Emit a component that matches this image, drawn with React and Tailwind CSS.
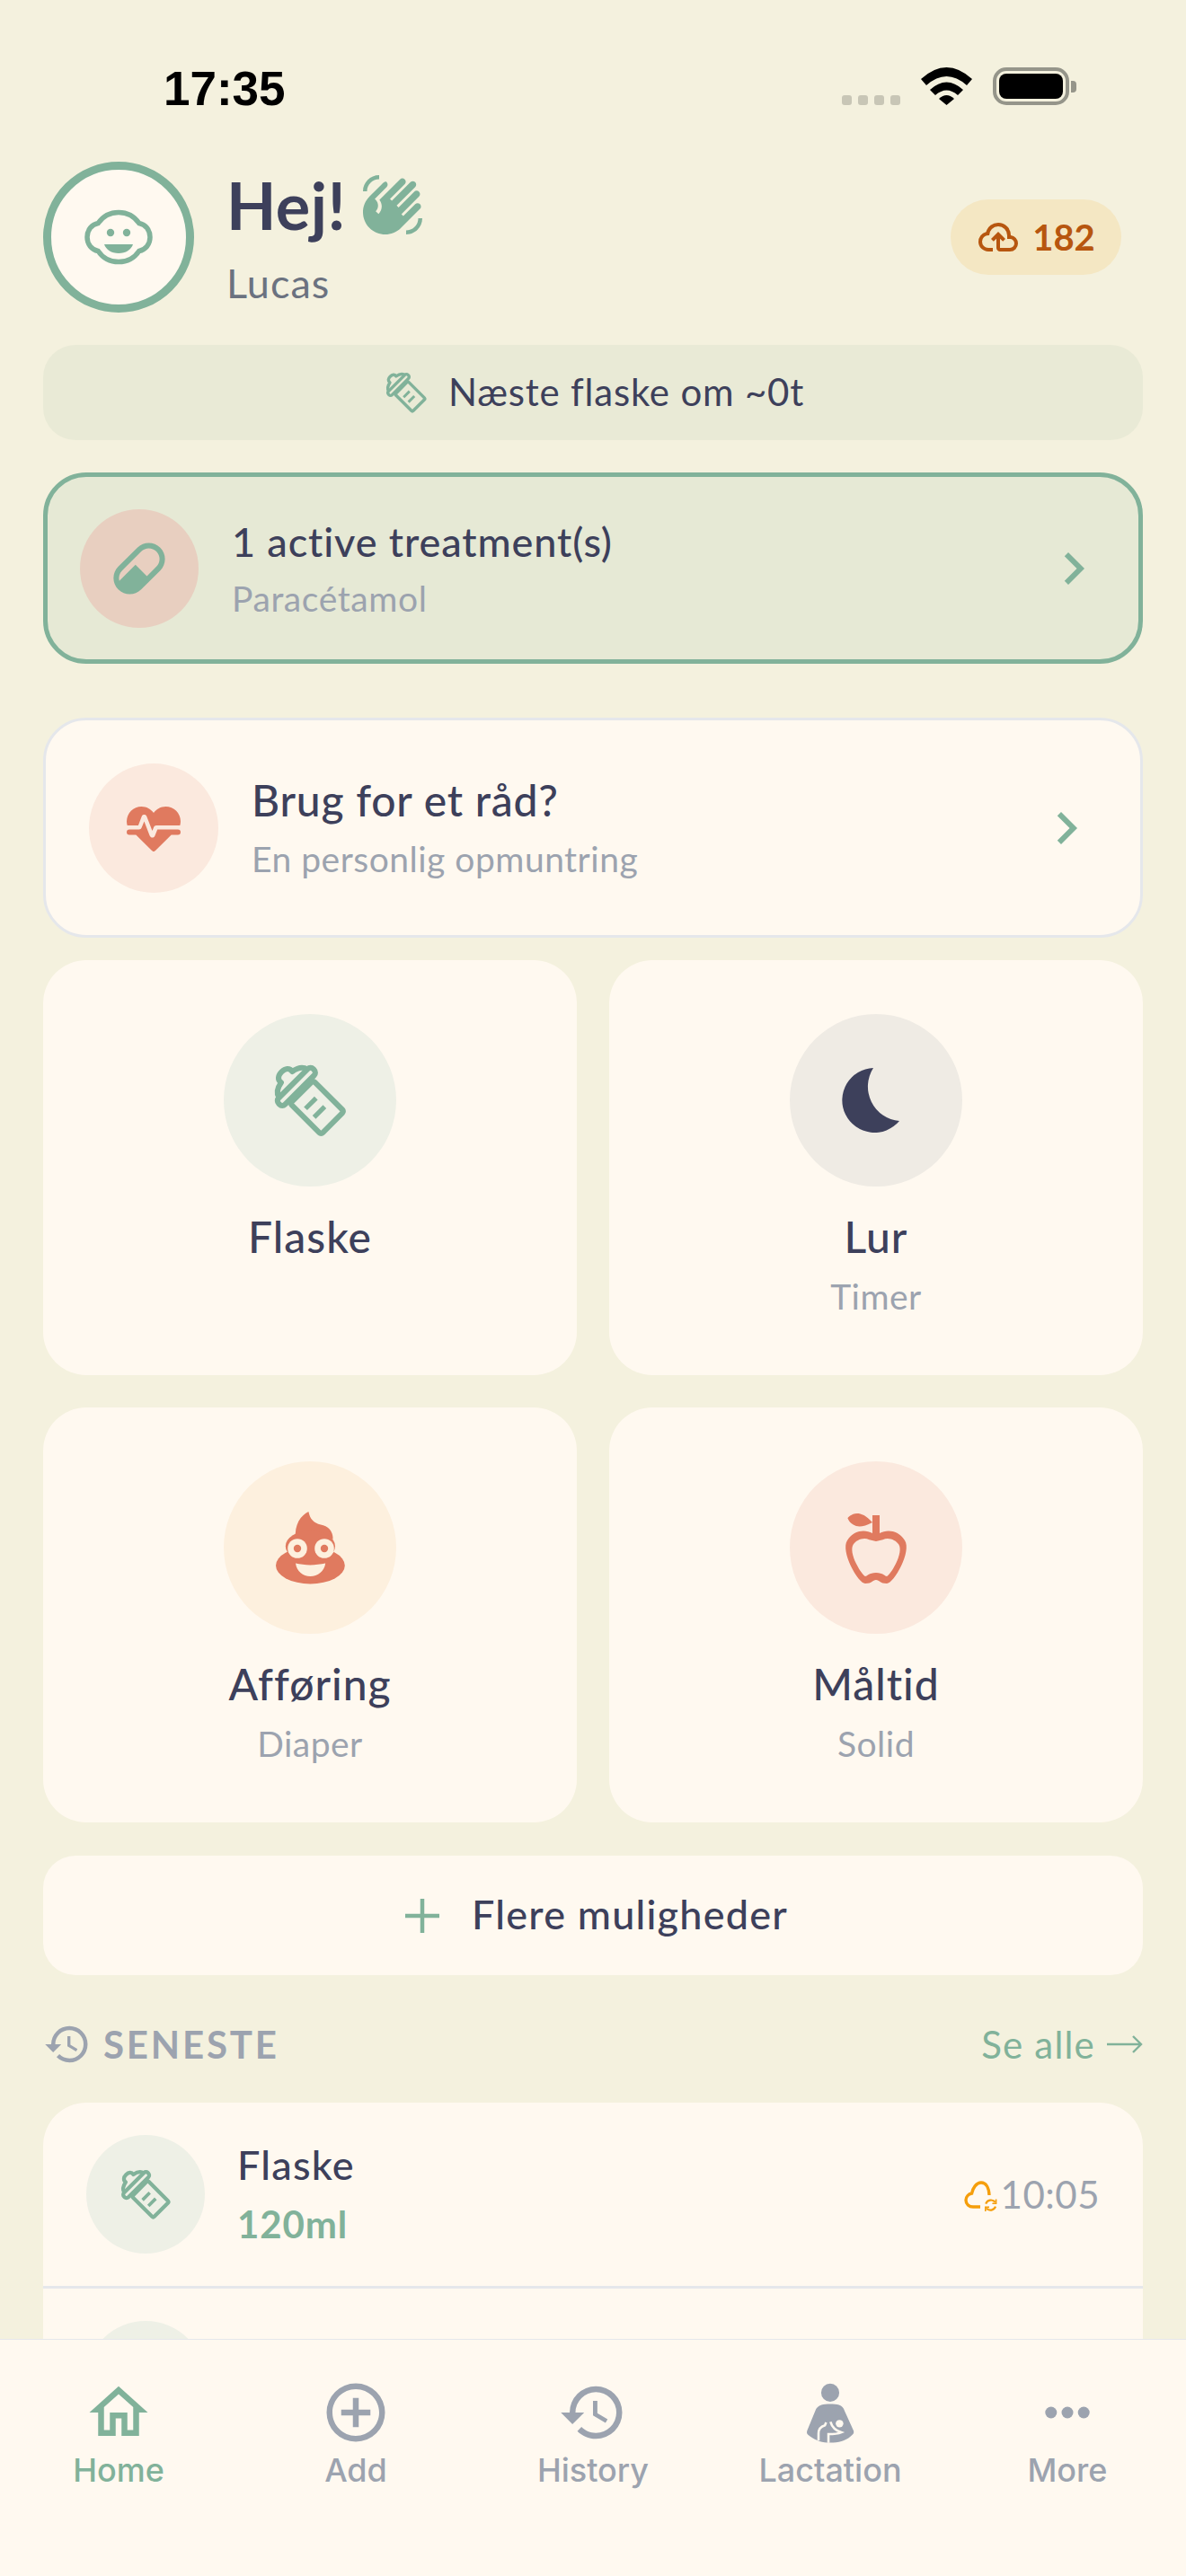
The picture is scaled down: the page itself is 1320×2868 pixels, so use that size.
import React from 'react';

const FONT = "font-['Lato','Noto_Sans',sans-serif]";

// icon paths, 24 unit grid
const PILL = 'M4.22,11.29L11.29,4.22C13.64,1.88 17.43,1.88 19.78,4.22C22.12,6.56 22.12,10.36 19.78,12.71L12.71,19.78C10.36,22.12 6.56,22.12 4.22,19.78C1.88,17.43 1.88,13.64 4.22,11.29M5.64,12.71C4.59,13.75 4.24,15.24 4.6,16.57L10.59,10.59L14.83,14.83L18.36,11.29C19.93,9.73 19.93,7.2 18.36,5.64C16.8,4.07 14.27,4.07 12.71,5.64L5.64,12.71Z';
const HEART = 'M7.5,4A5.5,5.5 0 0,0 2,9.5C2,10 2.09,10.5 2.22,11H6.3L7.57,7.63C7.87,6.83 9.05,6.75 9.43,7.63L11.5,13L12.09,11.58C12.22,11.25 12.57,11 13,11H21.78C21.91,10.5 22,10 22,9.5A5.5,5.5 0 0,0 16.5,4C14.64,4 13,4.93 12,6.34C11,4.93 9.36,4 7.5,4M3,12.5A1,1 0 0,0 2,13.5A1,1 0 0,0 3,14.5H5.44L11,20C12,20.9 12,20.9 13,20L18.56,14.5H21A1,1 0 0,0 22,13.5A1,1 0 0,0 21,12.5H13.4L12.47,14.8C12.07,15.81 10.92,15.67 10.55,14.83L8.5,9.5L7.54,11.83C7.39,12.21 7.05,12.5 6.6,12.5H3Z';
const CHEVRON = 'M8.59,16.58L13.17,12L8.59,7.41L10,6L16,12L10,18L8.59,16.58Z';
const CLOUD_UP = 'M6.5 20Q4.22 20 2.61 18.43 1 16.85 1 14.58 1 12.63 2.17 11.1 3.35 9.57 5.25 9.15 5.88 6.85 7.75 5.43 9.63 4 12 4 14.93 4 16.96 6.04 19 8.07 19 11 20.73 11.2 21.86 12.5 23 13.78 23 15.5 23 17.38 21.69 18.69 20.38 20 18.5 20H13Q12.18 20 11.59 19.41 11 18.83 11 18V12.85L9.4 14.4L8 13L12 9L16 13L14.6 14.4L13 12.85V18H18.5Q19.55 18 20.27 17.27 21 16.55 21 15.5 21 14.45 20.27 13.73 19.55 13 18.5 13H17V11Q17 8.93 15.54 7.46 14.08 6 12 6 9.93 6 8.46 7.46 7 8.93 7 11H6.5Q5.05 11 4.03 12.03 3 13.05 3 14.5 3 15.95 4.03 17 5.05 18 6.5 18H9V20Z';
const WAVE = 'M23 17C23 20.31 20.31 23 17 23V21.5C19.5 21.5 21.5 19.5 21.5 17H23M1 7C1 3.69 3.69 1 7 1V2.5C4.5 2.5 2.5 4.5 2.5 7H1M8.03 4.32L3.41 8.92C.19 12.14 .19 17.37 3.41 20.59S11.86 23.81 15.08 20.59L22.15 13.5C22.64 13.03 22.64 12.24 22.15 11.75C21.66 11.26 20.87 11.26 20.38 11.75L15.96 16.17L15.25 15.46L21.79 8.92C22.28 8.43 22.28 7.64 21.79 7.15S20.5 6.66 20 7.15L14.19 13L13.5 12.27L20.37 5.38C20.86 4.89 20.86 4.1 20.37 3.61S19.09 3.12 18.6 3.61L11.71 10.5L11 9.8L16.5 4.32C17 3.83 17 3.04 16.5 2.55S15.22 2.06 14.73 2.55L7.11 10.17C8.33 11.74 8.22 14 6.78 15.45L5.72 14.39C6.89 13.22 6.89 11.32 5.72 10.15L5.37 9.8L9.78 5.39C10.27 4.9 10.27 4.11 9.78 3.62S8.5 3.83 8.03 4.32Z';
const APPLE = 'M20,10C22,13 17,22 15,22C13,22 13,21 12,21C11,21 11,22 9,22C7,22 2,13 4,10C6,7 9,7 11,8V5C5.38,8.07 4.11,3.78 4.11,3.78C4.11,3.78 6.77,0.19 11,5V3H13V8C15,7 18,7 20,10M18.32,11.11C17.5,9.87 15.5,9 13.89,9.79L12,10.24L10.11,9.79C8.5,9 6.5,9.87 5.68,11.11C5,12.14 5.37,14.22 6.5,16.5C7.5,18.5 8.5,19.7 9,20C9.5,20 10,19 12,19C14,19 14.5,20 15,20C15.5,19.7 16.5,18.5 17.5,16.5C18.63,14.22 19,12.14 18.32,11.11Z';
const HOME = 'M12 5.69L17 10.19V18H15V12H9V18H7V10.19L12 5.69M12 3L2 12H5V20H11V14H13V20H19V12H22L12 3Z';
const ADD = 'M12,20C7.59,20 4,16.41 4,12C4,7.59 7.59,4 12,4C16.41,4 20,7.59 20,12C20,16.41 16.41,20 12,20M12,2A10,10 0 0,0 2,12A10,10 0 0,0 12,22A10,10 0 0,0 22,12A10,10 0 0,0 12,2M13,7H11V11H7V13H11V17H13V13H17V11H13V7Z';
const HISTORY = 'M13.5,8H12V13L16.28,15.54L17,14.33L13.5,12.25V8M13,3A9,9 0 0,0 4,12H1L4.96,16.03L9,12H6A7,7 0 0,1 13,5A7,7 0 0,1 20,12A7,7 0 0,1 13,19C11.07,19 9.32,18.21 8.06,16.94L6.64,18.36C8.27,20 10.5,21 13,21A9,9 0 0,0 22,12A9,9 0 0,0 13,3';

function Mdi({ d, size, className = '' }) {
  return (
    <svg viewBox="0 0 24 24" width={size} height={size} className={`shrink-0 fill-current ${className}`}>
      <path d={d} fillRule="evenodd" />
    </svg>
  );
}

function Bottle({ size }) {
  return (
    <svg viewBox="1 1 22 22" width={size} height={size} fill="none" stroke="#81B29A" strokeWidth="1.4" strokeLinejoin="round" className="shrink-0">
      <g transform="rotate(-45 12 12)">
        <rect x="7.85" y="9" width="8.3" height="11.15" rx="0.6" />
        <rect x="5.75" y="5.95" width="12.5" height="2.3" rx="1" />
        <path d="M6.9 5.9C7.2 4.6 8.3 3.9 10 3.6C9.8 2.4 10.7 1.75 12 1.75C13.3 1.75 14.2 2.4 14 3.6C15.7 3.9 16.8 4.6 17.1 5.9" />
        <path d="M9.7 12.7H13.5M9.7 15.8H13.5" strokeWidth="1.2" />
      </g>
    </svg>
  );
}

function BabyFace() {
  return (
    <svg viewBox="0 0 84 84" width="84" height="84" fill="none" className="shrink-0">
      <path d="M19.2 26.5A27.5 27.5 0 0 1 64.8 26.5C72 28 77 34 77 42C77 50 72 56 64.8 57.5A27.5 27.5 0 0 1 19.2 57.5C12 56 7 50 7 42C7 34 12 28 19.2 26.5Z" stroke="#81B29A" strokeWidth="5.5" />
      <circle cx="33" cy="37" r="4.2" fill="#81B29A" />
      <circle cx="51" cy="37" r="4.2" fill="#81B29A" />
      <path d="M26 50H58C56 56 50 60 42 60C34 60 28 56 26 50Z" fill="#81B29A" />
    </svg>
  );
}

function Moon() {
  return (
    <svg viewBox="0 0 24 24" width="96" height="96" className="shrink-0">
      <path d="M11.25 3A9 9 0 1 0 18.5 17.75A9.6 9.6 0 0 1 11.25 3Z" fill="#3D405B" />
    </svg>
  );
}

function Poop() {
  return (
    <svg viewBox="0 0 24 24" width="96" height="96" className="shrink-0">
      <g fill="#E07A5F">
        <path d="M11.6 2C12 4 13 5.2 15 5.6C17 6 18.4 7.2 18.4 9.6L8 9.6C7.6 5.5 9.5 3 11.6 2Z" />
        <ellipse cx="12.1" cy="11.6" rx="6.9" ry="4.3" />
        <ellipse cx="12.1" cy="17" rx="9.6" ry="5.1" />
      </g>
      <circle cx="8.5" cy="12.25" r="2.7" fill="#FDF0DE" />
      <circle cx="16" cy="12.25" r="2.7" fill="#FDF0DE" />
      <circle cx="8.5" cy="12.25" r="1.05" fill="#E07A5F" />
      <circle cx="16" cy="12.25" r="1.05" fill="#E07A5F" />
      <path d="M8 16.4C10.5 17 13.6 17 16.3 16.4C16 18.6 14.2 20 12.1 20C10 20 8.3 18.6 8 16.4Z" fill="#FDF0DE" />
    </svg>
  );
}

function CloudSync() {
  return (
    <svg viewBox="0 0 42 42" width="42" height="42" fill="none" className="shrink-0">
      <path d="M19 35H11C6.5 35 3 31.8 3 27.6C3 23.6 6 20.7 9.6 20C10.6 14.3 14.6 8 20 8C25.4 8 28.6 13.6 29 22" stroke="#F59E0B" strokeWidth="3.4" />
      <path d="M25.2 31.6A6 6 0 0 1 35.6 29.8M36 34.6A6 6 0 0 1 25.8 36.6" stroke="#F59E0B" strokeWidth="2.2" />
      <path d="M36.6 26.6V31.2H32.4M24.8 40V35.4H29" stroke="#F59E0B" strokeWidth="1.6" />
    </svg>
  );
}

function Nurse() {
  return (
    <svg viewBox="0 0 24 24" width="78" height="78" className="shrink-0">
      <circle cx="12" cy="5.2" r="3.1" fill="#9CA3AF" />
      <path d="M9 9.4C10.5 9 13.5 9 15 9.4C16 9.7 16.6 10.4 16.9 11.4L20 18.2C20.2 18.8 20 19.3 19.5 19.7C18 21.2 15.8 22.3 13 22.3H11C8.6 22.3 6 21 4.5 19.7C4 19.3 3.9 18.8 4.1 18.2L6.9 11.4C7.2 10.4 8 9.7 9 9.4Z" fill="#9CA3AF" />
      <circle cx="15.2" cy="15.8" r="1.3" fill="#FFF9F0" />
      <path d="M12.1 15.2C12.6 17 13.6 18.1 15.8 18.8C14.6 19.3 13 19.4 11.4 19.4V22.4M10.6 15.4L10.2 16.4C8.8 16.8 8 17.6 8 19.2V21.6" fill="none" stroke="#FFF9F0" strokeWidth="0.8" />
    </svg>
  );
}

function Dots() {
  return (
    <svg viewBox="0 0 24 24" width="78" height="78" className="shrink-0 fill-[#9CA3AF]">
      <circle cx="6.4" cy="12" r="2" />
      <circle cx="12" cy="12" r="2" />
      <circle cx="17.6" cy="12" r="2" />
    </svg>
  );
}

function Arrow() {
  return (
    <svg viewBox="0 0 40 24" width="40" height="24" fill="none" stroke="#81B29A" strokeWidth="2.4" className="shrink-0">
      <path d="M0 12H38M29 3L38 12L29 21" />
    </svg>
  );
}

function StatusBar() {
  return (
    <div className="flex h-[180px] justify-between pl-[182px] pr-[122px] pt-[72px]">
      <span className="font-['Liberation_Sans',sans-serif] text-[53px] font-bold leading-[54px] text-black">17:35</span>
      <div className="flex items-start pt-[3px]">
        <div className="mt-[31px] flex gap-[7px]">
          {[0, 1, 2, 3].map((i) => (
            <span key={i} className="h-[11px] w-[11px] rounded-[3px] bg-[#C8C6B6]" />
          ))}
        </div>
        <svg viewBox="0 0 57 42" width="57" height="42" className="ml-[23px] shrink-0">
          <path d="M0 13Q28.5 -13 57 13L51 20Q28.5 0 6 20Z" fill="#000" />
          <path d="M10 25Q28.5 8 47 25L41 31Q28.5 20 16 31Z" fill="#000" />
          <path d="M20 35Q28.5 27 37 35L28.5 42Z" fill="#000" />
        </svg>
        <div className="ml-[23px] flex items-center">
          <div className="h-[42px] w-[85px] rounded-[15px] border-[4px] border-[#95958A] p-[3px]">
            <div className="h-full rounded-[8px] bg-black" />
          </div>
          <div className="ml-[2px] h-[13px] w-[6px] rounded-r-[4px] bg-[#95958A]" />
        </div>
      </div>
    </div>
  );
}

function Header() {
  return (
    <div className="flex items-center justify-between pl-[48px] pr-[72px]">
      <div className="flex items-center">
        <div className="flex h-[168px] w-[168px] items-center justify-center rounded-full border-[9px] border-[#81B29A] bg-[#FFF9F0]">
          <BabyFace />
        </div>
        <div className="ml-[36px]">
          <div className="flex items-center">
            <span className="text-[72px] font-bold leading-[84px] tracking-[0.5px] text-[#3D405B]">Hej!</span>
            <span className="ml-[16px] text-[#81B29A]"><Mdi d={WAVE} size={72} /></span>
          </div>
          <div className="mt-[18px] text-[45px] leading-[54px] tracking-[1px] text-[#6B7280]">Lucas</div>
        </div>
      </div>
      <div className="flex h-[84px] w-[190px] items-center justify-center gap-[14px] rounded-full bg-[#F4E7C3] text-[#B7560F]">
        <Mdi d={CLOUD_UP} size={48} />
        <span className="text-[40px] font-bold leading-none">182</span>
      </div>
    </div>
  );
}

function ActionCard({ icon, bg, title, sub }) {
  return (
    <div className="flex h-[462px] flex-col items-center rounded-[48px] bg-[#FFF9F0] pt-[60px]">
      <div className={`flex h-[192px] w-[192px] items-center justify-center rounded-full ${bg}`}>{icon}</div>
      <div className="mt-[23px] text-[48px] font-medium leading-[66px] tracking-[1px] text-[#3D405B]">{title}</div>
      {sub && <div className="mt-[6px] text-[39px] leading-[54px] tracking-[0.5px] text-[#9CA3AF]">{sub}</div>}
    </div>
  );
}

function TabItem({ icon, label, active }) {
  return (
    <div className="flex w-[264px] flex-col items-center">
      <div className={active ? 'text-[#81B29A]' : 'text-[#9CA3AF]'}>{icon}</div>
      <span className={`mt-[3px] font-['Inter',sans-serif] text-[36px] font-medium leading-[44px] ${active ? 'text-[#81B29A]' : 'text-[#9CA3AF]'}`}>{label}</span>
    </div>
  );
}

export default function App() {
  return (
    <div className={`relative h-[2868px] w-[1320px] overflow-hidden bg-[#F4F1DE] ${FONT}`}>
      <StatusBar />
      <Header />

      <div className="px-[48px]">
        {/* next bottle */}
        <div className="mt-[36px] flex h-[106px] items-center justify-center gap-[20px] rounded-[36px] bg-[#E9EAD6]">
          <Bottle size={54} />
          <span className="pb-[2px] text-[42px] leading-none tracking-[0.8px] text-[#3D405B]">Næste flaske om ~0t</span>
        </div>

        {/* treatment */}
        <div className="mt-[36px] flex h-[213px] items-center rounded-[48px] border-[5px] border-[#81B29A] bg-[#E6E9D5] pl-[36px] pr-[36px]">
          <div className="flex h-[132px] w-[132px] shrink-0 items-center justify-center rounded-full bg-[#E8CFC0] text-[#81B29A]">
            <Mdi d={PILL} size={72} />
          </div>
          <div className="ml-[37px] flex-1">
            <div className="text-[45px] font-medium leading-[60px] tracking-[0.9px] text-[#3D405B]">1 active treatment(s)</div>
            <div className="mt-[6px] text-[39px] leading-[54px] tracking-[0.6px] text-[#9CA3AF]">Paracétamol</div>
          </div>
          <Mdi d={CHEVRON} size={72} className="text-[#81B29A]" />
        </div>

        {/* advice */}
        <div className="mt-[60px] flex h-[245px] items-center rounded-[48px] border-[3px] border-[#E5E7EB] bg-[#FFF9F0] pl-[48px] pr-[46px]">
          <div className="flex h-[144px] w-[144px] shrink-0 items-center justify-center rounded-full bg-[#FBE9DE] text-[#E07A5F]">
            <Mdi d={HEART} size={72} />
          </div>
          <div className="ml-[37px] flex-1 pb-[3px]">
            <div className="text-[48px] font-medium leading-[66px] tracking-[0.8px] text-[#3D405B]">Brug for et råd?</div>
            <div className="mt-[5px] text-[39px] leading-[54px] tracking-[0.5px] text-[#9CA3AF]">En personlig opmuntring</div>
          </div>
          <Mdi d={CHEVRON} size={72} className="text-[#81B29A]" />
        </div>

        {/* quick actions */}
        <div className="mt-[25px] grid grid-cols-2 gap-x-[36px] gap-y-[36px]">
          <ActionCard icon={<Bottle size={96} />} bg="bg-[#EEF0E6]" title="Flaske" />
          <ActionCard icon={<Moon />} bg="bg-[#EFEBE4]" title="Lur" sub="Timer" />
          <ActionCard icon={<Poop />} bg="bg-[#FDF0DE]" title="Afføring" sub="Diaper" />
          <ActionCard icon={<Mdi d={APPLE} size={96} className="text-[#E07A5F]" />} bg="bg-[#FBE9DE]" title="Måltid" sub="Solid" />
        </div>

        {/* more */}
        <div className="mt-[37px] flex h-[133px] items-center justify-center gap-[36px] rounded-[36px] bg-[#FFF9F0] pl-[8px]">
          <svg viewBox="0 0 38 38" width="38" height="38" stroke="#81B29A" strokeWidth="4.5" className="shrink-0">
            <path d="M19 0V38M0 19H38" />
          </svg>
          <span className="pb-[2px] text-[45px] font-medium leading-none tracking-[1.2px] text-[#3D405B]">Flere muligheder</span>
        </div>

        {/* recent header */}
        <div className="mt-[50px] flex h-[54px] items-center justify-between">
          <div className="flex items-center">
            <Mdi d={HISTORY} size={54} className="text-[#9CA3AF]" />
            <span className="ml-[13px] text-[42px] font-bold leading-none tracking-[2.8px] text-[#9CA3AF]">SENESTE</span>
          </div>
          <div className="flex items-center gap-[13px]">
            <span className="text-[42px] leading-none tracking-[1.2px] text-[#81B29A]">Se alle</span>
            <Arrow />
          </div>
        </div>

        {/* recent list */}
        <div className="mt-[38px] rounded-[48px] bg-[#FFF9F0]">
          <div className="flex items-center border-b-[3px] border-[#E5E7EB] px-[48px] py-[36px]">
            <div className="flex h-[132px] w-[132px] shrink-0 items-center justify-center rounded-full bg-[#EEF0E6]">
              <Bottle size={66} />
            </div>
            <div className="ml-[36px] flex-1 pb-[3px]">
              <div className="text-[45px] font-medium leading-[60px] tracking-[1.2px] text-[#3D405B]">Flaske</div>
              <div className="mt-[9px] text-[42px] font-bold leading-[54px] tracking-[0.9px] text-[#81B29A]">120ml</div>
            </div>
            <div className="flex items-center">
              <CloudSync />
              <span className="text-[42px] leading-none tracking-[0.5px] text-[#9CA3AF]">10:05</span>
            </div>
          </div>
          <div className="flex items-center px-[48px] py-[36px]">
            <div className="flex h-[132px] w-[132px] shrink-0 items-center justify-center rounded-full bg-[#EEF0E6]">
              <Bottle size={66} />
            </div>
          </div>
        </div>
      </div>

      {/* tab bar */}
      <div className="absolute inset-x-0 bottom-0 flex h-[264px] items-start border-t border-[#E5E7EB] bg-[#FFF9F0] pt-[42px]">
        <TabItem active icon={<Mdi d={HOME} size={78} />} label="Home" />
        <TabItem icon={<Mdi d={ADD} size={78} />} label="Add" />
        <TabItem icon={<Mdi d={HISTORY} size={78} />} label="History" />
        <TabItem icon={<Nurse />} label="Lactation" />
        <TabItem icon={<Dots />} label="More" />
      </div>
    </div>
  );
}
